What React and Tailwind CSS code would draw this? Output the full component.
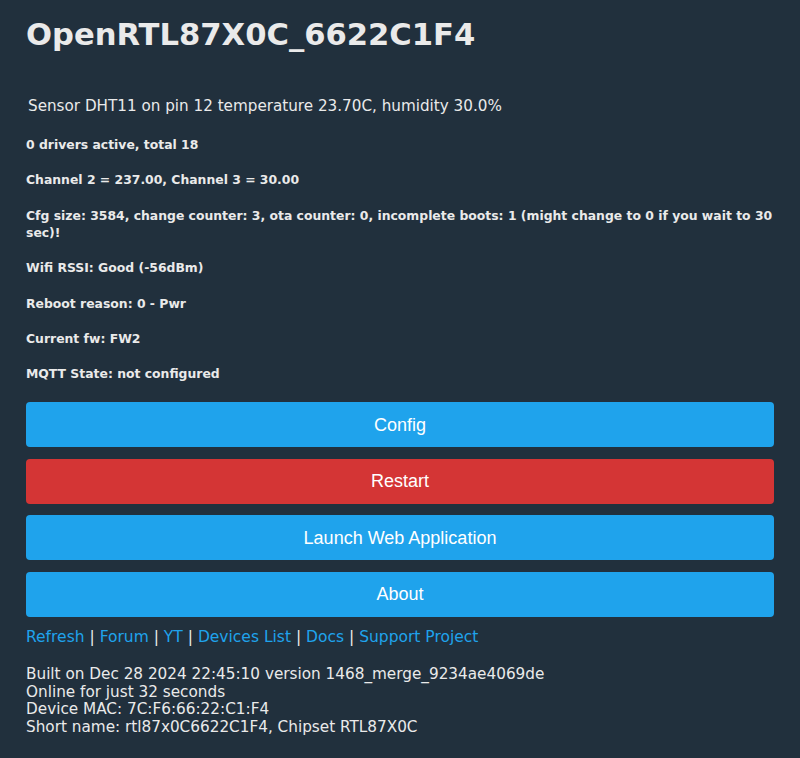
import React from 'react'

const infoLines = [
    "0 drivers active, total 18",
    "Channel 2 = 237.00, Channel 3 = 30.00",
    "Cfg size: 3584, change counter: 3, ota counter: 0, incomplete boots: 1 (might change to 0 if you wait to 30 sec)!",
    "Wifi RSSI: Good (-56dBm)",
    "Reboot reason: 0 - Pwr",
    "Current fw: FW2",
    "MQTT State: not configured",
]

const buttons = [
    { label: "Config", color: "bg-[#1fa3ec]" },
    { label: "Restart", color: "bg-[#d43535]" },
    { label: "Launch Web Application", color: "bg-[#1fa3ec]" },
    { label: "About", color: "bg-[#1fa3ec]" },
]

const links = ["Refresh", "Forum", "YT", "Devices List", "Docs", "Support Project"]

export default function App() {
    return (
        <div className="w-[800px] h-[758px] bg-[#21303d] text-[#eaeaea] font-['DejaVu_Sans',Verdana,sans-serif] px-[26px] pt-[17px] overflow-hidden">
            <h1 className="text-[30.6px] leading-[36px] font-bold">OpenRTL87X0C_6622C1F4</h1>

            <p className="mt-[44px] ml-[2px] text-[15.2px] leading-[18px]">
                Sensor DHT11 on pin 12 temperature 23.70C, humidity 30.0%
            </p>

            <div className="mt-[21px] flex flex-col gap-[18.4px]">
                {infoLines.map((line, i) => (
                    <p key={i} className="text-[12.4px] leading-[17px] font-bold">{line}</p>
                ))}
            </div>

            <div className="mt-[20px] flex flex-col gap-[11.5px]">
                {buttons.map((b) => (
                    <button
                        key={b.label}
                        className={`${b.color} h-[45px] w-full rounded-[4px] text-white text-[18px] leading-[42px] font-['Liberation_Sans',Arial,sans-serif]`}
                    >
                        {b.label}
                    </button>
                ))}
            </div>

            <p className="mt-[11px] text-[15.5px] leading-[18px]">
                {links.map((l, i) => (
                    <span key={l}>
                        {i > 0 && <span> | </span>}
                        <a className="text-[#1fa3ec]">{l}</a>
                    </span>
                ))}
            </p>

            <div className="mt-[20px] text-[15.25px] leading-[17.8px]">
                <p>Built on Dec 28 2024 22:45:10 version 1468_merge_9234ae4069de</p>
                <p>Online for just 32 seconds</p>
                <p>Device MAC: 7C:F6:66:22:C1:F4</p>
                <p>Short name: rtl87x0C6622C1F4, Chipset RTL87X0C</p>
            </div>
        </div>
    )
}
